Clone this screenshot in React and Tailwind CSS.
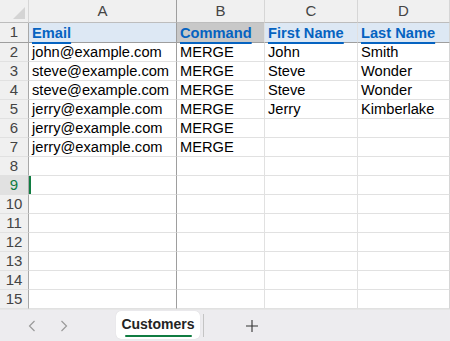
import React from "react";

const rows = [
  ["john@example.com", "MERGE", "John", "Smith"],
  ["steve@example.com", "MERGE", "Steve", "Wonder"],
  ["steve@example.com", "MERGE", "Steve", "Wonder"],
  ["jerry@example.com", "MERGE", "Jerry", "Kimberlake"],
  ["jerry@example.com", "MERGE", "", ""],
  ["jerry@example.com", "MERGE", "", ""],
];

const headers = ["Email", "Command", "First Name", "Last Name"];
const cols = ["A", "B", "C", "D"];
const colBorder = [
  "border-r border-r-[#9e9e9e]",
  "border-r border-r-[#e1e1e1]",
  "border-r border-r-[#e1e1e1]",
  "border-r border-r-[#d6d6d6]",
];

function Corner() {
  return (
    <div className="relative bg-[#f0f0f0] border-r border-b border-r-[#d6d6d6] border-b-[#bdbdbd]">
      <svg className="absolute right-[3px] bottom-[3px]" width="12" height="12" viewBox="0 0 12 12">
        <path d="M12 0 L12 12 L0 12 Z" fill="#d4d4d4" />
      </svg>
    </div>
  );
}

export default function App() {
  const total = 15;
  return (
    <div className="w-[450px] h-[341px] overflow-hidden bg-white flex flex-col" style={{ fontFamily: '"Liberation Sans", Arial, sans-serif' }}>
      <div className="grid grid-cols-[29px_148px_88px_93px_92px] grid-rows-[23px_20px_repeat(14,19px)] h-[309px]">
        <Corner />
        {cols.map((c, i) => (
          <div
            key={c}
            className={`flex items-center justify-center bg-[#f0f0f0] border-b border-b-[#bdbdbd] text-[15px] text-[#444] ${i === 0 ? "border-r border-r-[#9e9e9e]" : "border-r border-r-[#d6d6d6]"}`}
          >
            {c}
          </div>
        ))}

        {/* row 1 */}
        <div className="flex items-center justify-center bg-[#f0f0f0] border-r border-r-[#a8a8a8] border-b border-b-[#9e9e9e] text-[15px] text-[#444]">1</div>
        {headers.map((h, i) => (
          <div
            key={h}
            className={`flex items-center px-[3px] pt-[1px] border-b border-b-[#9e9e9e] ${colBorder[i]} ${i === 1 ? "bg-[#c8c8c8]" : "bg-[#dde8f4]"}`}
          >
            <span className="text-[14.67px] font-bold text-[#0563c1] underline decoration-2 underline-offset-[4px] leading-none">{h}</span>
          </div>
        ))}

        {Array.from({ length: total - 1 }, (_, r) => {
          const n = r + 2;
          const data = rows[r] || ["", "", "", ""];
          const sel = n === 9;
          return (
            <React.Fragment key={n}>
              <div
                className={`flex items-center justify-center border-r border-r-[#a8a8a8] border-b border-b-[#e1e1e1] text-[15px] ${sel ? "bg-[#e1e1e1] text-[#107c41]" : "bg-[#f0f0f0] text-[#444]"}`}
              >
                {n}
              </div>
              {data.map((v, i) => (
                <div
                  key={i}
                  className={`relative flex items-center px-[3px] border-b border-b-[#e1e1e1] ${colBorder[i]} text-[14.67px] text-black whitespace-nowrap overflow-hidden`}
                >
                  {sel && i === 0 && <span className="absolute left-0 top-0 bottom-0 w-[2px] bg-[#107c41]" />}
                  {v}
                </div>
              ))}
            </React.Fragment>
          );
        })}
      </div>

      <div className="flex-1 bg-[#edecef] flex items-stretch border-t border-t-[#e6e6e6]">
        <div className="w-[116px] flex items-center">
          <svg className="ml-[28px]" width="8" height="12" viewBox="0 0 8 12">
            <path d="M6.5 1 L1.5 6 L6.5 11" fill="none" stroke="#9a9a9a" strokeWidth="1.2" />
          </svg>
          <svg className="ml-[24px]" width="8" height="12" viewBox="0 0 8 12">
            <path d="M1.5 1 L6.5 6 L1.5 11" fill="none" stroke="#9a9a9a" strokeWidth="1.2" />
          </svg>
        </div>
        <div className="w-[84px] mt-[1px] mb-[2px] bg-white rounded-[5px] flex flex-col items-center justify-center shadow-[0_0_1px_rgba(0,0,0,0.15)]">
          <span className="text-[14px] font-bold text-[#242424] leading-none mt-[3px]">Customers</span>
          <span className="mt-[4px] w-[67px] h-[2px] bg-[#107c41] rounded" />
        </div>
        <div className="ml-[3px] w-px bg-[#c4c4c4] my-[4px]" />
        <div className="flex items-center ml-[42px]">
          <svg width="12" height="12" viewBox="0 0 12 12">
            <path d="M6 0 V12 M0 6 H12" fill="none" stroke="#333" strokeWidth="1.1" />
          </svg>
        </div>
      </div>
    </div>
  );
}
